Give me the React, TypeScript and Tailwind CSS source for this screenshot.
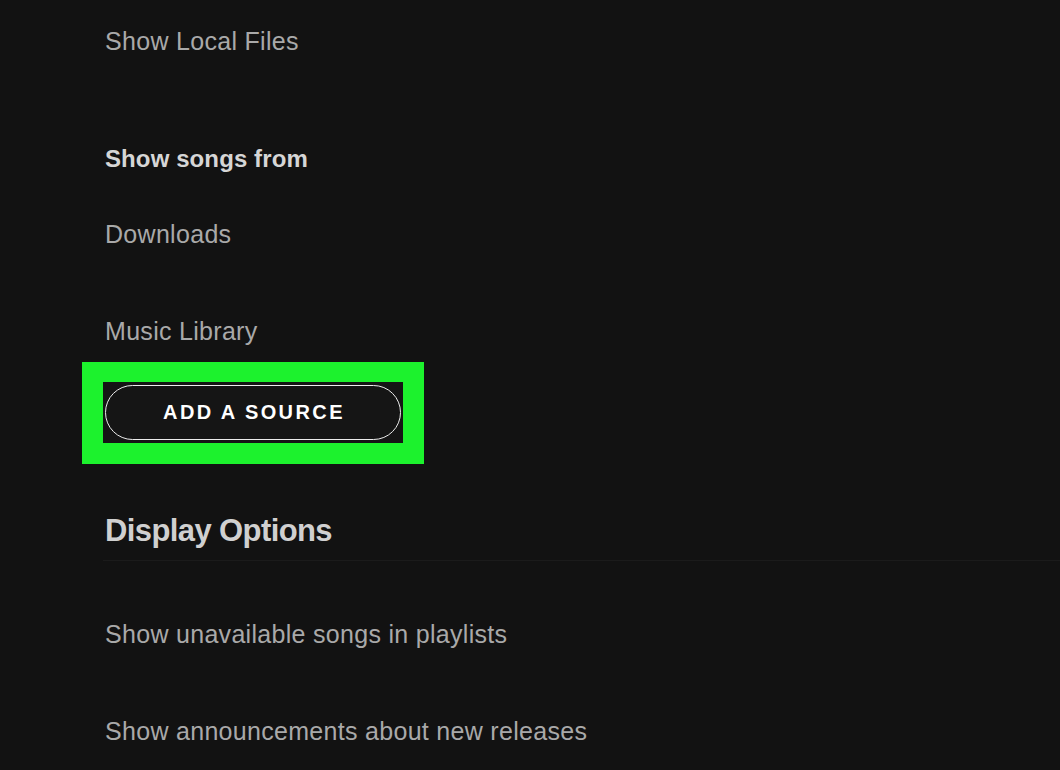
export default function App() {
  const rowText = "flex h-[40px] items-center text-[25px] tracking-[0.3px] text-[#a9a9a9]";

  return (
    <div
      className="h-[770px] w-[1060px] overflow-hidden bg-[#121212] pl-[105px] pt-[22px]"
      style={{ fontFamily: '"Liberation Sans", Arial, sans-serif' }}
    >
      <div className={rowText}>Show Local Files</div>

      <div className="mt-[77px] flex h-[40px] items-center text-[24px] font-bold tracking-[0.1px] text-[#d6d6d6]">
        Show songs from
      </div>

      <div className={`mt-[36px] ${rowText}`}>Downloads</div>
      <div className={`mt-[57px] ${rowText}`}>Music Library</div>

      {/* highlighted button */}
      <div className="-ml-[23px] mt-[10px] w-[342px] bg-[#1cf22d] p-[20px_21px_21px_21px]">
        <div className="h-[61px] w-[300px] bg-[#151515] pl-[2px] pt-[3px]">
          <button className="flex h-[55px] w-[296px] items-center justify-center rounded-full border-[1.5px] border-[#ececec] bg-[#151515] pb-[1px] pl-[2px] text-[20px] font-bold tracking-[2.4px] text-white">
            ADD A SOURCE
          </button>
        </div>
      </div>

      <div className="mt-[47px] flex h-[40px] items-center text-[31px] font-bold tracking-[-0.6px] text-[#d0d0d0]">
        Display Options
      </div>
      <div className="-ml-[2px] mt-[9px] h-px bg-[#1b1b1b]" />

      <div className={`mt-[54px] ${rowText}`}>Show unavailable songs in playlists</div>
      <div className={`mt-[57px] ${rowText}`}>Show announcements about new releases</div>
    </div>
  );
}
